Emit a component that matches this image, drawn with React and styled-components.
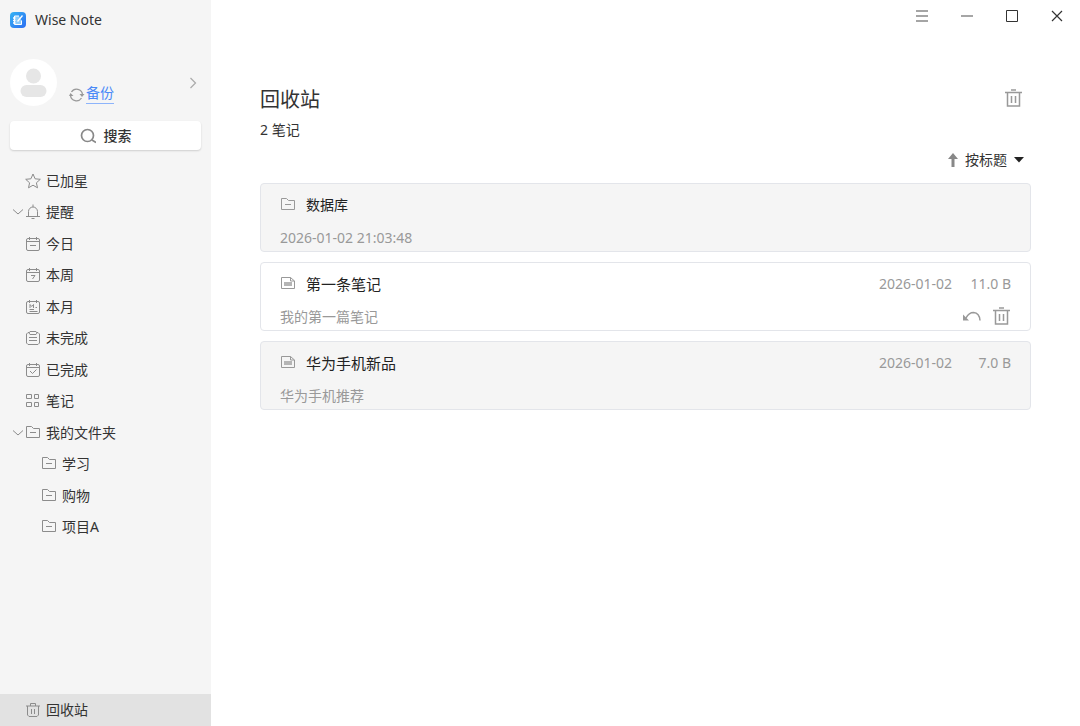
import React from 'react';
import styled, { createGlobalStyle, css } from 'styled-components';

const GlobalStyle = createGlobalStyle`
  * {
    box-sizing: border-box;
  }

  body {
    background: #fff;
    color: #333;
    font-family: 'Noto Sans', 'Noto Sans CJK SC', sans-serif;
    font-size: 14px;
    line-height: 20px;
    margin: 0;
  }
`;

const Svg = styled.svg`
  display: block;
  fill: none;
  flex: none;
  stroke: currentColor;
`;

const Icon = ({ size = 16, width, children }) => (
  <Svg
    width={width || size}
    height={size}
    viewBox={`0 0 ${width || size} ${size}`}
    aria-hidden="true"
  >
    {children}
  </Svg>
);

const CalendarIcon = ({ children }) => (
  <Icon>
    <rect x="1.5" y="2.5" width="13" height="12" rx="1.5" />
    <path d="M4.5 1v3M11.5 1v3M1.5 5.5h13" />
    {children}
  </Icon>
);

const StarIcon = () => (
  <Icon>
    <path d="M8 1l2.1 4.8 5.2.5-3.9 3.5 1.1 5L8 12.2l-4.5 2.6 1.1-5L.7 6.3l5.2-.5z" />
  </Icon>
);

const BellIcon = () => (
  <Icon>
    <path d="M3.500 12.500V7.500a4.500 4.500 0 0 1 9 0v5M1 12.500h14M8 .5V3M6.500 14.500h3" />
  </Icon>
);

const TodayIcon = () => (
  <CalendarIcon>
    <path d="M5 9.500h6" />
  </CalendarIcon>
);

const WeekIcon = () => (
  <CalendarIcon>
    <path d="M6 8.500h4L7.500 12" />
  </CalendarIcon>
);

const MonthIcon = () => (
  <Icon>
    <rect x="1.5" y="2.5" width="13" height="12" rx="1.5" />
    <path d="M4.5 1v3M11.5 1v3M5 9V5.500l1.700 2 1.800-2V9M4.500 10.500H9M4.500 12.500h8M10.500 8.500h1.500" />
  </Icon>
);

const ClipboardIcon = () => (
  <Icon>
    <path d="M4 2.500H3L1.500 4v9L3 14.500h10l1.500-1.500V4L13 2.500h-1" />
    <path d="M5 1.500h6l1 1.500-1 1.500H5L4 3zM4 7.500h8M4 10.500h8" />
  </Icon>
);

const DoneIcon = () => (
  <CalendarIcon>
    <path d="M5 9l2.500 2.500 4-4" />
  </CalendarIcon>
);

const GridIcon = () => (
  <Icon>
    <path d="M1.500 1.500h5v4h-5zM9.500 1.500h4v4h-4zM1.500 9.500h5v4h-5zM9.500 9.500h4v4h-4z" />
  </Icon>
);

const FolderIcon = () => (
  <Icon>
    <path d="M1.500 1.500h5l2 2h6v9h-13zM5 7.500h6" />
  </Icon>
);

const NoteIcon = () => (
  <Icon>
    <path d="M1.500 1.500h9l4 3.500v7.500h-13zM10.500 1.500V5h4" />
    <rect x="4" y="6" width="8" height="4" fill="#b5b5b5" stroke="none" />
  </Icon>
);

const SmallTrashIcon = () => (
  <Icon>
    <path d="M1 4h14M5.500 4V1.500h5V4M2.500 4v9L4 14.500h8l1.500-1.500V4M6.500 7v5M9.500 7v5" />
  </Icon>
);

const TrashIcon = () => (
  <Icon size={18}>
    <path d="M0 3.500h17M6 1h5M2.500 3.500V17h12V3.500M6.500 7v7M10.500 7v7" strokeWidth="1.500" />
  </Icon>
);

const RestoreIcon = () => (
  <Icon size={18}>
    <path d="M3 11Q6 5.500 10.500 5.500 16.500 6 17 13.500" strokeWidth="1.500" />
    <path d="M0 7.500V13.500H6z" fill="currentColor" stroke="none" />
  </Icon>
);

const ChevronDownIcon = () => (
  <Icon size={8} width={12}>
    <path d="M1 1.500l5 4.500 5-4.500" />
  </Icon>
);

const ChevronRightIcon = () => (
  <Icon size={12} width={8}>
    <path d="M1.500 1l5 5-5 5" strokeWidth="1.200" />
  </Icon>
);

const SyncIcon = () => (
  <Icon>
    <path d="M2.500 5A6 6 0 0 1 13.500 7.500M12.500 11A6 6 0 0 1 1.500 8.500" strokeWidth="1.300" />
    <path d="M10.500 7H15.500L13 10zM0 9H4.500L1.500 6z" fill="currentColor" stroke="none" />
  </Icon>
);

const SearchIcon = () => (
  <Icon>
    <circle cx="7.500" cy="7.500" r="6" strokeWidth="1.700" />
    <path d="M12 12l4 2.500" strokeWidth="1.700" />
  </Icon>
);

const AppLogo = () => (
  <Icon>
    <defs>
      <linearGradient id="logo" x1="0" y1="0" x2="1" y2="1">
        <stop offset="0" stopColor="#36b4f4" />
        <stop offset="1" stopColor="#2b6df2" />
      </linearGradient>
    </defs>
    <rect width="16" height="16" rx="4" fill="url(#logo)" stroke="none" />
    <path d="M9 4H4.500v8.500h7V8.500" fill="#8ccbfa" stroke="#fff" />
    <path
      d="M3 6h2.500M3 8.500h2.500M3 11h2.500M7.500 9.500l5-6"
      stroke="#fff"
      strokeWidth="1.300"
    />
  </Icon>
);

const BaseButton = styled.button`
  align-items: center;
  background: transparent;
  border: none;
  color: inherit;
  cursor: pointer;
  display: flex;
  font: inherit;
  justify-content: center;
  padding: 0;
`;

const Layout = styled.div`
  display: grid;
  grid-template-columns: 211px minmax(0, 1fr);
  min-height: 100vh;
`;

const Sidebar = styled.aside`
  background: #f5f5f5;
  display: flex;
  flex-direction: column;
`;

const Brand = styled.div`
  align-items: center;
  display: flex;
  gap: 9px;
  height: 40px;
  padding-left: 10px;
`;

const Account = styled.div`
  align-items: center;
  display: flex;
  gap: 12px;
  height: 47px;
  margin: 19px 14px 15px 10px;
`;

const Avatar = styled.div`
  background: #fff;
  border-radius: 50%;
  color: #e6e6e6;
  height: 47px;
  width: 47px;
`;

const Backup = styled.div`
  align-items: center;
  align-self: flex-end;
  color: #999;
  display: flex;
  flex: 1;
  gap: 1px;
`;

const BackupLink = styled.a`
  border-bottom: 1px solid #8db4fb;
  color: #4a8af8;
  margin-bottom: 2px;
  text-decoration: none;
`;

const AccountButton = styled(BaseButton)`
  color: #aaa;
`;

const SearchButton = styled(BaseButton)`
  background: #fff;
  border-radius: 4px;
  box-shadow: 0 1px 2px rgba(0, 0, 0, 0.16);
  font-weight: 500;
  gap: 8px;
  height: 29px;
  margin: 0 10px;

  svg {
    color: #888;
  }
`;

// Twelve equal rows share the height of the list
const NavList = styled.ul`
  display: grid;
  grid-auto-rows: 1fr;
  height: 378px;
  list-style: none;
  margin: 15px 0 auto;
  padding: 0;
`;

const NavLink = styled.a`
  align-items: center;
  color: inherit;
  display: flex;
  gap: 5px;
  height: 100%;
  padding-left: ${(p) => (p.$nested ? '41px' : '25px')};
  text-decoration: none;

  svg {
    color: #8c8c8c;
  }

  ${(p) =>
    p.$expanded &&
    css`
      gap: 1px;
      padding-left: 12px;

      span {
        margin-left: 4px;
      }
    `}
`;

const TrashLink = styled(NavLink)`
  background: #e2e2e2;
  height: 32px;
`;

const Main = styled.main`
  min-width: 0;
`;

const WindowBar = styled.div`
  display: flex;
  height: 32px;
  justify-content: flex-end;
  padding-right: 1px;
`;

const WindowButton = styled(BaseButton)`
  color: ${(p) => (p.$dark ? '#333' : '#888')};
  width: 45px;
`;

const Content = styled.div`
  padding: 52px 49px;
`;

const Header = styled.header`
  align-items: flex-start;
  display: flex;
  justify-content: space-between;
  padding-right: 8px;
`;

const Title = styled.h1`
  font-size: 20px;
  font-weight: 400;
  line-height: 32px;
  margin: 0;
`;

const Count = styled.p`
  margin: 4px 0 10px;
`;

const IconButton = styled(BaseButton)`
  color: #999;
  height: 28px;
`;

const SortBar = styled.div`
  align-items: center;
  display: flex;
  gap: 7px;
  height: 20px;
  justify-content: flex-end;
  margin-bottom: 13px;
  padding-right: 7px;
`;

const SortSelect = styled.select`
  appearance: none;
  background: transparent;
  border: none;
  color: inherit;
  font: inherit;
  padding: 0;
`;

const NoteList = styled.ul`
  display: grid;
  gap: 10px;
  list-style: none;
  margin: 0;
  padding: 0;
`;

const Card = styled.li`
  background: ${(p) => (p.$active ? '#fff' : '#f5f5f5')};
  border: 1px solid #e3e5ea;
  border-radius: 4px;
  display: grid;
  gap: 12px;
  padding: 10px 19px 3px;
`;

const CardRow = styled.div`
  align-items: center;
  color: #999;
  display: flex;
  height: 21px;
`;

const CardTitle = styled.h2`
  color: #222;
  flex: 1;
  font-size: ${(p) => (p.$folder ? '14px' : '15px')};
  font-weight: 400;
  line-height: 20px;
  margin: 0;
  padding-left: 10px;
`;

const Size = styled.span`
  text-align: right;
  width: 59px;
`;

const Summary = styled.span`
  flex: 1;
`;

const Actions = styled.div`
  display: flex;
  gap: 12px;
  padding-bottom: 2px;
`;

const navItems = [
  { label: '已加星', icon: StarIcon },
  { label: '提醒', icon: BellIcon, expanded: true },
  { label: '今日', icon: TodayIcon },
  { label: '本周', icon: WeekIcon },
  { label: '本月', icon: MonthIcon },
  { label: '未完成', icon: ClipboardIcon },
  { label: '已完成', icon: DoneIcon },
  { label: '笔记', icon: GridIcon },
  { label: '我的文件夹', icon: FolderIcon, expanded: true },
  { label: '学习', icon: FolderIcon, nested: true },
  { label: '购物', icon: FolderIcon, nested: true },
  { label: '项目A', icon: FolderIcon, nested: true },
];

const notes = [
  { title: '数据库', summary: '2026-01-02 21:03:48', folder: true },
  {
    title: '第一条笔记',
    summary: '我的第一篇笔记',
    date: '2026-01-02',
    size: '11.0 B',
    active: true,
  },
  {
    title: '华为手机新品',
    summary: '华为手机推荐',
    date: '2026-01-02',
    size: '7.0 B',
  },
];

const NavItem = ({ label, icon: ItemIcon, expanded, nested }) => (
  <li>
    <NavLink href="#" $expanded={expanded} $nested={nested}>
      {expanded && <ChevronDownIcon />}
      <ItemIcon />
      <span>{label}</span>
    </NavLink>
  </li>
);

const NoteCard = ({ title, summary, date, size, folder, active }) => (
  <Card $active={active}>
    <CardRow>
      {folder ? <FolderIcon /> : <NoteIcon />}
      <CardTitle $folder={folder}>{title}</CardTitle>
      {date && <time>{date}</time>}
      {size && <Size>{size}</Size>}
    </CardRow>
    <CardRow>
      <Summary>{summary}</Summary>
      {active && (
        <Actions>
          <IconButton type="button" aria-label="还原">
            <RestoreIcon />
          </IconButton>
          <IconButton type="button" aria-label="删除">
            <TrashIcon />
          </IconButton>
        </Actions>
      )}
    </CardRow>
  </Card>
);

const App = () => (
  <Layout>
    <GlobalStyle />
    <Sidebar>
      <Brand>
        <AppLogo />
        Wise Note
      </Brand>
      <Account>
        <Avatar>
          <Icon size={47}>
            <g fill="currentColor" stroke="none">
              <circle cx="23.500" cy="17" r="7.500" />
              <rect x="10.500" y="26" width="26" height="12" rx="6" />
            </g>
          </Icon>
        </Avatar>
        <Backup>
          <SyncIcon />
          <BackupLink href="#">备份</BackupLink>
        </Backup>
        <AccountButton type="button" aria-label="账户">
          <ChevronRightIcon />
        </AccountButton>
      </Account>
      <SearchButton type="button">
        <SearchIcon />
        搜索
      </SearchButton>
      <NavList>
        {navItems.map((item) => (
          <NavItem key={item.label} {...item} />
        ))}
      </NavList>
      <TrashLink href="#">
        <SmallTrashIcon />
        <span>回收站</span>
      </TrashLink>
    </Sidebar>
    <Main>
      <WindowBar>
        <WindowButton type="button" aria-label="菜单">
          <Icon size={12}>
            <path d="M0 1h12M0 6h12M0 11h12" strokeWidth="1.500" />
          </Icon>
        </WindowButton>
        <WindowButton type="button" aria-label="最小化">
          <Icon size={12}>
            <path d="M0 6h12" strokeWidth="1.500" />
          </Icon>
        </WindowButton>
        <WindowButton type="button" aria-label="最大化" $dark>
          <Icon size={12}>
            <path d="M.5.5h11v11H.5z" />
          </Icon>
        </WindowButton>
        <WindowButton type="button" aria-label="关闭" $dark>
          <Icon size={12}>
            <path d="M1 1l10 10M11 1L1 11" strokeWidth="1.200" />
          </Icon>
        </WindowButton>
      </WindowBar>
      <Content>
        <Header>
          <Title>回收站</Title>
          <IconButton type="button" aria-label="清空回收站">
            <TrashIcon />
          </IconButton>
        </Header>
        <Count>2 笔记</Count>
        <SortBar>
          <Icon size={14} width={10}>
            <path d="M5 0l5 6H6.500v8h-3V6H0z" fill="#888" stroke="none" />
          </Icon>
          <SortSelect aria-label="排序">
            <option>按标题</option>
          </SortSelect>
          <Icon size={6} width={10}>
            <path d="M0 0h10L5 5.500z" fill="#222" stroke="none" />
          </Icon>
        </SortBar>
        <NoteList>
          {notes.map((note) => (
            <NoteCard key={note.title} {...note} />
          ))}
        </NoteList>
      </Content>
    </Main>
  </Layout>
);

export default App;
